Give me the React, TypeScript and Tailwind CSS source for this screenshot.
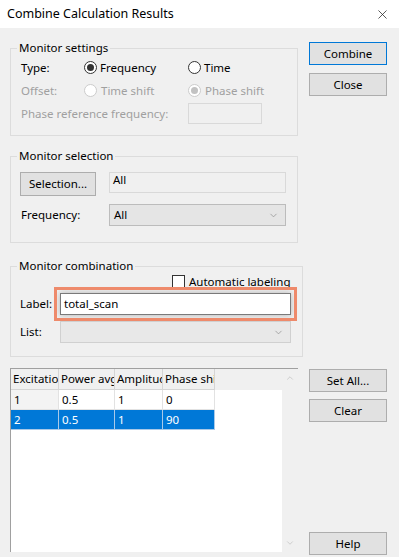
import { ChevronDown, ChevronUp, X } from "lucide-react";

const font = { fontFamily: '"Noto Sans", "Open Sans", sans-serif' };

function Btn({ label, primary = false }: { label: string; primary?: boolean }) {
  return (
    <button
      className={`w-[78px] h-[23px] bg-[#e1e1e1] text-[11.5px] text-black border ${
        primary ? "border-[#0078d7]" : "border-[#adadad]"
      }`}
    >
      {label}
    </button>
  );
}

function Radio({ checked = false, disabled = false }: { checked?: boolean; disabled?: boolean }) {
  return (
    <span
      className={`w-[13px] h-[13px] rounded-full border flex items-center justify-center bg-white ${
        disabled ? "border-[#cccccc]" : "border-[#333333]"
      }`}
    >
      {checked && (
        <span className={`w-[7px] h-[7px] rounded-full ${disabled ? "bg-[#c2c2c2]" : "bg-[#333333]"}`} />
      )}
    </span>
  );
}

function Group({ title, className, children }: { title: string; className: string; children: React.ReactNode }) {
  return (
    <fieldset className={`border border-[#dcdcdc] ${className}`}>
      <legend className="ml-[6px] px-[2px] leading-[16px] text-black">{title}</legend>
      {children}
    </fieldset>
  );
}

function Combo({ value, disabled = false }: { value: string; disabled?: boolean }) {
  return (
    <div
      className={`flex-1 h-[22px] flex items-center justify-between pl-[4px] pr-[6px] border ${
        disabled ? "bg-[#e8e8e8] border-[#d0d0d0]" : "bg-[#e5e5e5] border-[#bcbcbc]"
      }`}
    >
      <span>{value}</span>
      <ChevronDown className="w-[11px] h-[11px] text-[#8a8a8a]" strokeWidth={1.5} />
    </div>
  );
}

const cols = [
  { name: "Excitation", w: "w-[48px]" },
  { name: "Power avg", w: "w-[56px]" },
  { name: "Amplitude", w: "w-[48px]" },
  { name: "Phase shift", w: "w-[52px]" },
];

const rows = [
  { cells: ["1", "0.5", "1", "0"], sel: false },
  { cells: ["2", "0.5", "1", "90"], sel: true },
];

export default function App() {
  return (
    <div className="w-[399px] h-[557px] bg-[#f0f0f0] text-[11.5px] text-black overflow-hidden" style={font}>
      <div className="h-[28px] bg-white flex items-center justify-between pl-[7px] pr-[9px]">
        <span className="text-[12.5px]">Combine Calculation Results</span>
        <X className="w-[15px] h-[15px] text-[#222]" strokeWidth={1.2} />
      </div>

      <div className="flex pl-[10px]">
        <div className="w-[288px] flex flex-col">
          <Group title="Monitor settings" className="mt-[12px] h-[96px]">
            <div className="pl-[10px]">
              <div className="flex items-center h-[23px]">
                <span className="w-[63px]">Type:</span>
                <Radio checked />
                <span className="ml-[3px] w-[88px]">Frequency</span>
                <Radio />
                <span className="ml-[3px]">Time</span>
              </div>
              <div className="flex items-center h-[23px] text-[#a0a0a0]">
                <span className="w-[63px]">Offset:</span>
                <Radio disabled />
                <span className="ml-[4px] w-[87px]">Time shift</span>
                <Radio checked disabled />
                <span className="ml-[4px]">Phase shift</span>
              </div>
              <div className="flex items-center h-[23px] text-[#a0a0a0]">
                <span className="w-[167px]">Phase reference frequency:</span>
                <div className="w-[74px] h-[21px] border border-[#d9d9d9] bg-[#f0f0f0]" />
              </div>
            </div>
          </Group>

          <Group title="Monitor selection" className="mt-[12px] h-[95px]">
            <div className="pl-[9px] pr-[11px] pt-[8px]">
              <div className="flex items-start">
                <button className="w-[76px] h-[24px] bg-[#e1e1e1] border border-[#adadad]">Selection...</button>
                <div className="ml-[13px] flex-1 h-[21px] border border-[#d9d9d9] bg-[#f0f0f0] pl-[3px] leading-[14px]">
                  All
                </div>
              </div>
              <div className="flex items-center mt-[8px]">
                <span className="w-[89px] pl-[1px]">Frequency:</span>
                <Combo value="All" />
              </div>
            </div>
          </Group>

          <Group title="Monitor combination" className="mt-[15px] h-[99px]">
            <div className="pl-[9px] pr-[11px]">
              <div className="flex items-center h-[15px] pl-[152px]">
                <span className="w-[13px] h-[13px] border border-[#333] bg-white" />
                <span className="ml-[4px] whitespace-nowrap">Automatic labeling</span>
              </div>
              <div className="flex items-center mt-[4px]">
                <span className="w-[40px]">Label:</span>
                <div className="flex-1 h-[22px] bg-white border border-[#7a7a7a] pl-[3px] flex items-center outline-[3px] outline-solid outline-[#ee8a6b] outline-offset-[3px] shadow-[0_0_6px_rgba(0,0,0,0.25)]">
                  total_scan
                </div>
              </div>
              <div className="flex items-center mt-[6px]">
                <span className="w-[40px]">List:</span>
                <Combo value="" disabled />
              </div>
            </div>
          </Group>
        </div>

        <div className="ml-[11px] flex flex-col gap-[8px] pt-[14px]">
          <Btn label="Combine" primary />
          <Btn label="Close" />
        </div>
      </div>

      <div className="flex pl-[10px] mt-[11px]">
        <div className="w-[288px] h-[184px] border-l border-t border-[#a0a0a0] bg-white flex">
          <div className="flex-1 flex flex-col">
            <div className="flex h-[21px] bg-[#f0f0f0]">
              {cols.map((c) => (
                <div
                  key={c.name}
                  className={`${c.w} shrink-0 overflow-hidden whitespace-nowrap text-clip border-r border-b border-[#d5d5d5] pl-[2px] leading-[20px]`}
                >
                  {c.name}
                </div>
              ))}
              <div className="flex-1 border-b border-[#f0f0f0]" />
            </div>
            {rows.map((r, i) => (
              <div key={i} className="flex h-[20px]">
                {r.cells.map((v, j) => (
                  <div
                    key={j}
                    className={`${cols[j].w} shrink-0 pl-[3px] leading-[20px] border-r border-b ${
                      r.sel
                        ? "bg-[#0078d7] text-white border-[#a9c9e8]"
                        : `${j === 0 ? "bg-[#f3f3f3]" : "bg-white"} border-[#e2e2e2]`
                    }`}
                  >
                    {v}
                  </div>
                ))}
              </div>
            ))}
          </div>
          <div className="w-[16px] bg-[#f0f0f0] flex flex-col items-center justify-between py-[4px]">
            <ChevronUp className="w-[10px] h-[10px] text-[#b8b8b8]" strokeWidth={1.5} />
            <ChevronDown className="w-[10px] h-[10px] text-[#b8b8b8]" strokeWidth={1.5} />
          </div>
        </div>

        <div className="ml-[11px] flex flex-col gap-[7px] pt-[1px] h-[187px]">
          <Btn label="Set All..." />
          <Btn label="Clear" />
          <div className="mt-auto">
            <Btn label="Help" />
          </div>
        </div>
      </div>
    </div>
  );
}
